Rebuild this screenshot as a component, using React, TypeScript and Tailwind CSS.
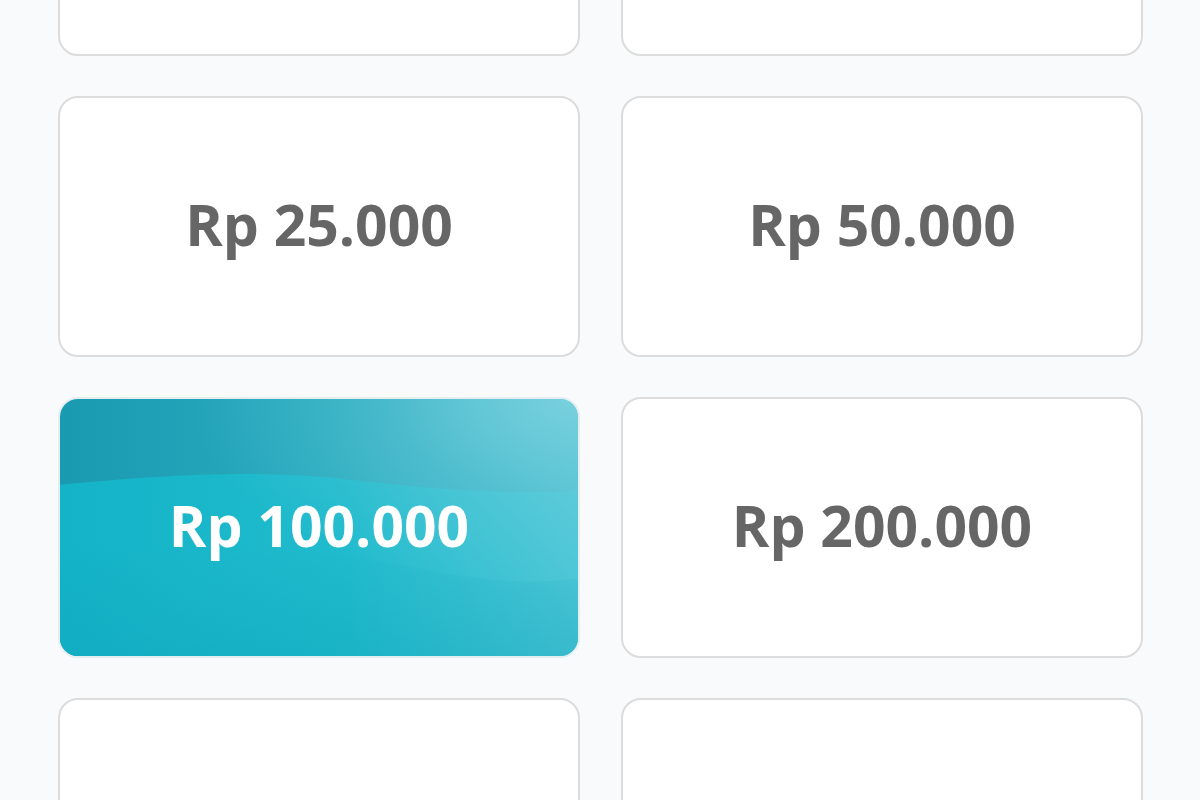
const amounts = [
  { label: "Rp 5.000" },
  { label: "Rp 10.000" },
  { label: "Rp 25.000" },
  { label: "Rp 50.000" },
  { label: "Rp 100.000", selected: true },
  { label: "Rp 200.000" },
  { label: "Rp 300.000" },
  { label: "Rp 500.000" },
];

function WaveBg() {
  return (
    <svg
      className="absolute inset-0 h-full w-full"
      viewBox="0 0 520 258"
      preserveAspectRatio="none"
    >
      <defs>
        <linearGradient id="top" x1="0" y1="0" x2="1" y2="0">
          <stop offset="0" stopColor="#1a9ab1" />
          <stop offset="0.5" stopColor="#29abbf" />
          <stop offset="1" stopColor="#4fc0d1" />
        </linearGradient>
        <linearGradient id="low" x1="0" y1="0" x2="1" y2="0">
          <stop offset="0" stopColor="#14b3c7" />
          <stop offset="0.55" stopColor="#20bbcd" />
          <stop offset="1" stopColor="#4cc6d6" />
        </linearGradient>
        <linearGradient id="shade" x1="0" y1="0" x2="0" y2="1">
          <stop offset="0" stopColor="#0a9fb6" stopOpacity="0" />
          <stop offset="1" stopColor="#0a9fb6" stopOpacity="0.3" />
        </linearGradient>
        <radialGradient id="glow" cx="1" cy="0" r="0.75">
          <stop offset="0" stopColor="#86d6e2" stopOpacity="0.75" />
          <stop offset="0.5" stopColor="#86d6e2" stopOpacity="0.25" />
          <stop offset="1" stopColor="#86d6e2" stopOpacity="0" />
        </radialGradient>
      </defs>
      <rect width="520" height="258" fill="url(#top)" />
      <path
        d="M0 86 C110 76 200 70 300 82 C390 92 460 96 520 92 L520 258 L0 258 Z"
        fill="url(#low)"
      />
      <path
        d="M0 150 C140 140 260 150 360 170 C430 184 480 186 520 180 L520 258 L0 258 Z"
        fill="url(#shade)"
      />
      <rect width="520" height="258" fill="url(#glow)" />
    </svg>
  );
}

function AmountCard({ label, selected }: { label: string; selected?: boolean }) {
  if (selected) {
    return (
      <div className="relative h-[261px] overflow-hidden rounded-[20px] border-2 border-[#e4eef1] flex items-center justify-center">
        <WaveBg />
        <span className="relative -mt-1 text-[57px] font-bold text-white">{label}</span>
      </div>
    );
  }
  return (
    <div className="h-[261px] rounded-[20px] border-2 border-[#dcdcdc] bg-white flex items-center justify-center">
      <span className="-mt-1 text-[57px] font-bold text-[#666666]">{label}</span>
    </div>
  );
}

export default function App() {
  return (
    <div
      className="h-[800px] w-[1200px] overflow-hidden bg-[#f8fafc]"
      style={{ fontFamily: '"Open Sans", "Noto Sans", sans-serif' }}
    >
      <div className="mt-[-205px] grid grid-cols-2 gap-x-[41px] gap-y-[40px] pl-[58px] pr-[57px]">
        {amounts.map((a) => (
          <AmountCard key={a.label} label={a.label} selected={a.selected} />
        ))}
      </div>
    </div>
  );
}
